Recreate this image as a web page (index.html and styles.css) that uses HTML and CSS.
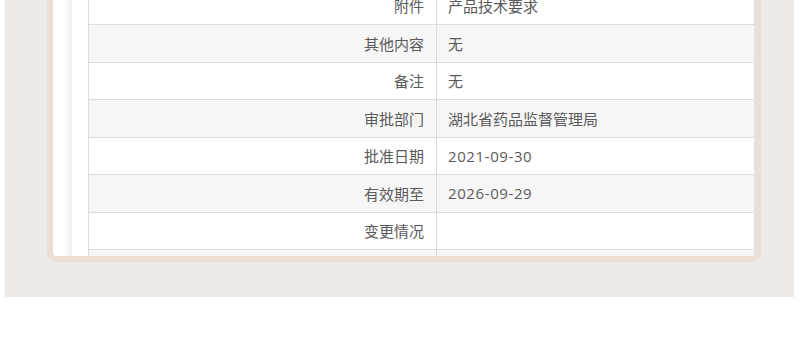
FILE: index.html
```html
<!DOCTYPE html>
<html lang="zh-CN">
<head>
<meta charset="utf-8">
<title>注册信息</title>
<link rel="stylesheet" href="styles.css">
</head>
<body>
<div class="page">
  <div class="frame">
    <div class="side"></div>
    <div class="gap"></div>
    <div class="table">
      <div class="row white"><div class="label">附件</div><div class="value">产品技术要求</div></div>
      <div class="row gray"><div class="label">其他内容</div><div class="value">无</div></div>
      <div class="row white"><div class="label">备注</div><div class="value">无</div></div>
      <div class="row gray"><div class="label">审批部门</div><div class="value">湖北省药品监督管理局</div></div>
      <div class="row white"><div class="label">批准日期</div><div class="value num">2021-09-30</div></div>
      <div class="row gray"><div class="label">有效期至</div><div class="value num">2026-09-29</div></div>
      <div class="row white"><div class="label">变更情况</div><div class="value"></div></div>
      <div class="row gray last"><div class="label"></div><div class="value"></div></div>
    </div>
  </div>
</div>
</body>
</html>
```
FILE: styles.css
```css
html, body {
  margin: 0;
  padding: 0;
  background: #ffffff;
}
body {
  font-family: "Noto Sans CJK SC", "Microsoft YaHei", sans-serif;
  font-size: 15px;
  color: #5a5a5a;
}
.page {
  margin-left: 5px;
  width: 789px;
  height: 297px;
  background: #edeae7;
  overflow: hidden;
}
.frame {
  margin-left: 42px;
  margin-top: -18.5px;
  width: 702px;
  border: 6px solid #ebdfd4;
  border-radius: 10px;
  background: #ffffff;
  display: flex;
  overflow: hidden;
}
.side {
  width: 19px;
  flex: none;
  background: linear-gradient(to right, #ffffff 55%, #f3f3f3 90%, #ececec 100%);
}
.gap {
  width: 16px;
  flex: none;
  background: #ffffff;
}
.table {
  flex: 1;
  border-left: 1px solid #dcdcdc;
  border-right: 1px solid #e2e2e2;
}
.row {
  display: flex;
  height: 37.5px;
  box-sizing: border-box;
  border-bottom: 1px solid #dcdcdc;
}
.row.white { background: #ffffff; }
.row.gray { background: #f6f6f6; }
.row.last { height: 5.5px; border-bottom: none; }
.label {
  width: 348px;
  flex: none;
  box-sizing: border-box;
  padding-right: 12px;
  text-align: right;
  border-right: 1px solid #dcdcdc;
  display: flex;
  align-items: center;
  justify-content: flex-end;
}
.value {
  flex: 1;
  padding-left: 11px;
  display: flex;
  align-items: center;
}
.value.num {
  font-family: "Open Sans", "Noto Sans CJK SC", sans-serif;
  letter-spacing: 0.6px;
}
```
